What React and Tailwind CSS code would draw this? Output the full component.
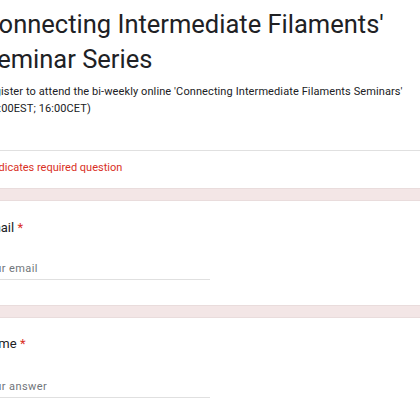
export default function App() {
  return (
    <div className="w-[420px] h-[420px] overflow-hidden bg-[#f3e6e6] font-['Roboto',sans-serif]">
      <div className="ml-[-37px] w-[520px] flex flex-col gap-[11px]">
        {/* Header card */}
        <div className="bg-white border-b border-[#e9dcdc]">
          <div className="px-[19px] pt-[7px] pb-[33px] border-b border-[#e0e0e0]">
            <h1 className="w-[450px] text-[25.5px] leading-[35px] text-[#202124]">
              Connecting Intermediate Filaments' Seminar Series
            </h1>
            <p className="w-[450px] mt-[6px] text-[11px] leading-[17px] text-[#202124] tracking-[0.1px]">
              Register to attend the bi-weekly online 'Connecting Intermediate Filaments Seminars' (10:00EST; 16:00CET)
            </p>
          </div>
          <div className="px-[19px] pt-[8px] pb-[12px] text-[11px] leading-[17px] text-[#d93025]">
            * Indicates required question
          </div>
        </div>

        {/* Email */}
        <div className="bg-white border-y border-[#e9dcdc] px-[19px] pt-[17px] pb-[25px]">
          <div className="text-[13px] leading-[20px] text-[#202124]">
            Email <span className="text-[#d93025]">*</span>
          </div>
          <div className="mt-[21px] w-[228px] h-[21px] flex items-center border-b border-[#e0e0e0] text-[11px] text-[#70757a] tracking-[0.4px]">
            Your email
          </div>
        </div>

        {/* Name */}
        <div className="bg-white border-t border-[#e9dcdc] px-[19px] pt-[16px] pb-[25px]">
          <div className="text-[13px] leading-[20px] text-[#202124]">
            Name <span className="text-[#d93025]">*</span>
          </div>
          <div className="mt-[23px] w-[228px] h-[21px] flex items-center border-b border-[#e0e0e0] text-[11px] text-[#70757a] tracking-[0.4px]">
            Your answer
          </div>
        </div>
      </div>
    </div>
  );
}
